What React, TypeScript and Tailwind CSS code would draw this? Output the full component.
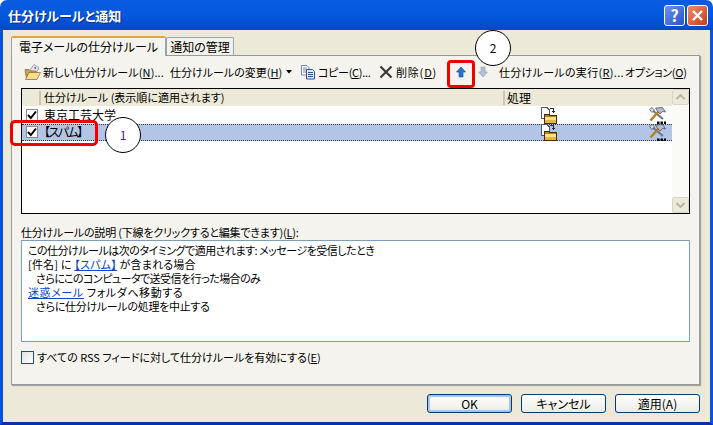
const jp = "font-['Noto_Sans_CJK_JP','Liberation_Sans',sans-serif] [font-feature-settings:'palt']";

const FolderMail = () => (
  <svg width="18" height="18" viewBox="0 0 18 18">
    <path d="M6 7 L10 1.5 L15 5 L12 10 Z" fill="#dfe6f2" stroke="#7a8aa8" strokeWidth="0.7" />
    <path d="M9.5 4.5 L12 4 L12 6.5 Z" fill="#c0504d" />
    <path d="M1 6.5 H5 L6 8 H12 V16 H2.5 Z" fill="#c9a14f" stroke="#8a6a28" strokeWidth="0.7" />
    <path d="M1.5 16.5 L5 9.5 H16.5 L13 16.5 Z" fill="#f6dc90" stroke="#8a6a28" strokeWidth="0.7" />
  </svg>
);

const CopyIcon = () => (
  <svg width="16" height="16" viewBox="0 0 16 16">
    <path d="M1.5 1.5 H7 L9 3.5 V11 H1.5 Z" fill="#fff" stroke="#6f86b5" />
    <path d="M3 4 H7 M3 6 H7 M3 8 H7" stroke="#6f86b5" />
    <path d="M6.5 5.5 H12.5 L14.5 7.5 V15 H6.5 Z" fill="#dfe8f8" stroke="#2f5597" />
    <path d="M8 8.5 H13 M8 10.5 H13 M8 12.5 H13" stroke="#2f5597" />
  </svg>
);

const DeleteIcon = () => (
  <svg width="14" height="14" viewBox="0 0 14 14">
    <path d="M1.5 1.5 L12.5 12.5 M12.5 1.5 L1.5 12.5" stroke="#3c3c3c" strokeWidth="2.2" />
  </svg>
);

const ArrowIcon = ({ down, color, edge }: { down?: boolean; color: string; edge: string }) => (
  <svg width="10" height="12" viewBox="0 0 10 12">
    <path
      d={down ? "M3 1 H7 V6 H9.5 L5 11 L0.5 6 H3 Z" : "M5 1 L9.5 6 H7 V11 H3 V6 H0.5 Z"}
      fill={color}
      stroke={edge}
      strokeWidth="0.6"
    />
  </svg>
);

const MoveIcon = () => (
  <svg width="16" height="17" viewBox="0 0 16 17" shapeRendering="crispEdges">
    <path d="M0.5 0.5 H6 L8.5 3 V11.5 H0.5 Z" fill="#fff" stroke="#4f5a70" />
    <path d="M9 1.5 H12.5 V5" fill="none" stroke="#1f2a44" />
    <path d="M11 4 H14 L12.5 6 Z" fill="#1f2a44" />
    <path d="M3.5 7.5 H8 L9 8.5 H15.5 V16.5 H3.5 Z" fill="#b8860b" stroke="#3f2f08" />
    <path d="M4 10 H15 V13 H4 Z" fill="#fbe08a" />
    <path d="M4 13 H15 V16 H4 Z" fill="#e8b53e" />
  </svg>
);

const ToolsIcon = () => (
  <svg width="17" height="17" viewBox="0 0 17 17">
    <path d="M2.5 2.5 L14 12" stroke="#6d7888" strokeWidth="2.2" />
    <path d="M0.5 2.5 L3 0.5 L5.5 3 L3 5.5 Z" fill="#d4d9e2" stroke="#3d4656" strokeWidth="0.7" />
    <path d="M1.5 13.5 L10 4" stroke="#b8821e" strokeWidth="2.6" />
    <path d="M6.5 1 L13.5 0.5 L16.5 5 L13.5 4.5 L11 7 L8 3.5 Z" fill="#b4bcc8" stroke="#3d4656" strokeWidth="0.7" />
    <path d="M8 14.5 H10.5 V17 H8 Z M11.5 14.5 H14 V17 H11.5 Z M15 14.5 H17 V17 H15 Z" fill="#000" />
  </svg>
);

const CheckBox = () => (
  <div className="w-[12px] h-[12px] border border-[#8a8a8a] bg-white flex items-center justify-center">
    <svg width="10" height="10" viewBox="0 0 10 10">
      <path d="M1 5 L3.8 8 L9 1.5" fill="none" stroke="#000" strokeWidth="2" />
    </svg>
  </div>
);

const Rule = ({ label, selected, labelClass }: { label: string; selected?: boolean; labelClass?: string }) => (
  <div
    className={`flex items-center h-[17px] ${
      selected ? "bg-[#b2c5e6] border-y border-dotted border-[#3a3a3a]" : "bg-white"
    }`}
  >
    <div className="w-[20px] shrink-0 pl-[4px] pb-[2px] flex items-center">
      <CheckBox />
    </div>
    <div className="w-[499px] shrink-0 pl-[2px] pb-[2px] whitespace-nowrap">
      <span className={labelClass}>{label}</span>
    </div>
    <MoveIcon />
    <div className="w-[92px] shrink-0" />
    <ToolsIcon />
  </div>
);

const Button = ({ label, isDefault }: { label: string; isDefault?: boolean }) => (
  <button
    className={`w-[85px] h-[19px] rounded-[3px] border border-[#003c74] text-[12px] leading-none flex items-center justify-center bg-gradient-to-b from-white to-[#ecebe5] text-black ${
      isDefault ? "shadow-[inset_0_0_0_2px_#a9c3ef]" : ""
    }`}
  >
    {label}
  </button>
);

export default function App() {
  return (
    <div className={`w-[713px] h-[425px] relative overflow-hidden flex flex-col bg-white text-[12px] leading-none text-black ${jp}`}>
      {/* title bar */}
      <div className="h-[30px] shrink-0 rounded-t-[7px] bg-gradient-to-b from-[#0a5ae0] via-[#0359dd] to-[#0348c8] flex items-center pl-[8px] pr-[5px]">
        <span className="text-white font-bold text-[13px] [text-shadow:1px_1px_0_#0a2a8c]">仕分けルールと通知</span>
        <div className="ml-auto flex gap-[2px]">
          <div className="w-[21px] h-[21px] rounded-[3px] border border-white bg-gradient-to-br from-[#6d92ee] to-[#2b50c8] text-white font-bold text-[16px] flex items-center justify-center">?</div>
          <div className="w-[21px] h-[21px] rounded-[3px] border border-white bg-gradient-to-br from-[#ec8a68] to-[#c93a14] flex items-center justify-center">
            <svg width="13" height="13" viewBox="0 0 13 13">
              <path d="M2 2 L11 11 M11 2 L2 11" stroke="#fff" strokeWidth="2.4" />
            </svg>
          </div>
        </div>
      </div>

      {/* window body */}
      <div className="flex-1 border-x-[3px] border-b-[3px] border-x-[#0853e0] border-b-[#0631a8] bg-[#ece9d8] flex flex-col px-[8px]">
        {/* tabs */}
        <div className="flex items-end h-[25px] shrink-0 relative z-10">
          <div className="h-[20px] w-[155px] mb-[-1px] bg-[#f4f3ee] border-x border-[#91a7b4] border-t-[2px] border-t-[#e8a33a] rounded-t-[2px] flex items-center justify-center">
            電子メールの仕分けルール
          </div>
          <div className="h-[18px] w-[68px] bg-[#f2f1ea] border-x border-t border-[#91a7b4] rounded-t-[2px] flex items-center justify-center">
            通知の管理
          </div>
        </div>

        {/* tab panel */}
        <div className="h-[330px] shrink-0 mr-[2px] bg-[#f4f3ee] border border-[#919b9c] shadow-[1px_1px_1px_#a8a69c] flex flex-col px-[9px]">
          {/* toolbar */}
          <div className="h-[32px] shrink-0 flex items-center whitespace-nowrap text-[11px]">
            <div className="ml-[3px] w-[19px] shrink-0"><FolderMail /></div>
            <span className="w-[127px] shrink-0 tracking-[0.1px]">新しい仕分けルール(<u>N</u>)...</span>
            <span className="w-[116px] shrink-0">仕分けルールの変更(<u>H</u>)</span>
            <svg className="w-[14px] shrink-0" width="14" height="4" viewBox="0 0 14 4"><path d="M0 0 H6 L3 3.5 Z" fill="#000" /></svg>
            <div className="w-[18px] shrink-0"><CopyIcon /></div>
            <span className="w-[61px] shrink-0 tracking-[-0.3px]">コピー(<u>C</u>)...</span>
            <div className="w-[17px] shrink-0"><DeleteIcon /></div>
            <span className="w-[60px] shrink-0 tracking-[0.8px]">削除(<u>D</u>)</span>
            <div className="w-[22px] shrink-0"><ArrowIcon color="#1f78d8" edge="#0d4a96" /></div>
            <div className="w-[21px] shrink-0"><ArrowIcon down color="#b4c0d2" edge="#94a0b4" /></div>
            <span className="w-[126px] shrink-0 tracking-[0.3px]">仕分けルールの実行(<u>R</u>)...</span>
            <span className="shrink-0 tracking-[-0.3px]">オプション(<u>O</u>)</span>
          </div>

          {/* rule list */}
          <div className="h-[126px] shrink-0 border border-black bg-white flex">
            <div className="flex-1 min-w-0 flex flex-col">
              <div className="h-[17px] shrink-0 bg-[#ece9d8] flex items-center">
                <div className="w-[19px] h-[14px] shrink-0 border-r-2 border-[#c9c6b4]" />
                <span className="pl-[3px] pb-[1px] w-[462px] shrink-0 whitespace-nowrap text-[11px]">仕分けルール (表示順に適用されます)</span>
                <div className="h-[14px] border-l-2 border-[#c9c6b4] pl-[2px] flex items-center">処理</div>
              </div>
              <div className="h-[1px]" />
              <Rule label="東京工芸大学" />
              <Rule label="【スパム】" selected labelClass="tracking-[-1.5px]" />
            </div>
            <div className="w-[17px] shrink-0 bg-[#fafaf6] flex flex-col justify-between">
              <div className="h-[16px] bg-[#ece9d8] border border-[#d8d5c5] rounded-[2px] flex items-center justify-center">
                <svg width="9" height="6" viewBox="0 0 9 6"><path d="M0.5 5 L4.5 1 L8.5 5" fill="none" stroke="#b8b6a8" strokeWidth="2" /></svg>
              </div>
              <div className="h-[16px] bg-[#ece9d8] border border-[#d8d5c5] rounded-[2px] flex items-center justify-center">
                <svg width="9" height="6" viewBox="0 0 9 6"><path d="M0.5 1 L4.5 5 L8.5 1" fill="none" stroke="#b8b6a8" strokeWidth="2" /></svg>
              </div>
            </div>
          </div>

          {/* description */}
          <div className="mt-[10px] h-[16px] shrink-0 flex items-center whitespace-nowrap text-[11px] tracking-[-0.2px]">
            <span>仕分けルールの説明 (下線をクリックすると編集できます)(<u>L</u>):</span>
          </div>
          <div className="h-[102px] shrink-0 border border-[#7f9db9] bg-white pt-[2px] pl-[6px] text-[11px] leading-[14px] whitespace-nowrap">
            <div className="tracking-[-0.5px]">この仕分けルールは次のタイミングで適用されます: メッセージを受信したとき</div>
            <div className="tracking-[0.2px]">[件名] に <a className="text-[#0645c8] underline">【スパム】</a> が含まれる場合</div>
            <div className="pl-[8px] tracking-[-0.55px]">さらにこのコンピュータで送受信を行った場合のみ</div>
            <div className="tracking-[0.6px]"><a className="text-[#0645c8] underline">迷惑メール</a> フォルダへ移動する</div>
            <div className="pl-[8px] tracking-[-0.3px]">さらに仕分けルールの処理を中止する</div>
          </div>

          {/* RSS option */}
          <div className="mt-[9px] flex items-center gap-[3px] whitespace-nowrap text-[11px]">
            <div className="w-[13px] h-[13px] border border-[#1c5180] bg-gradient-to-br from-[#e4e3dc] to-white" />
            <span>すべての RSS フィードに対して仕分けルールを有効にする(<u>E</u>)</span>
          </div>
        </div>

        {/* footer buttons */}
        <div className="flex-1 flex justify-end items-start pt-[9px] gap-[9px] pr-[2px]">
          <Button label="OK" isDefault />
          <Button label="キャンセル" />
          <Button label="適用(A)" />
        </div>
      </div>

      {/* annotations */}
      <div className="absolute left-[10px] top-[120px] w-[88px] h-[26px] border-[3px] border-[#f00000] rounded-[5px]" />
      <div className="absolute left-[447px] top-[60px] w-[28px] h-[28px] border-[3px] border-[#f00000] rounded-[4px]" />
      <div className="absolute left-[105px] top-[117px] w-[36px] h-[36px] rounded-full border border-black bg-white flex items-center justify-center text-[#4b1a8c] text-[12px]">1</div>
      <div className="absolute left-[475px] top-[30px] w-[36px] h-[36px] rounded-full border border-black bg-white flex items-center justify-center text-black text-[12px]">2</div>
    </div>
  );
}
